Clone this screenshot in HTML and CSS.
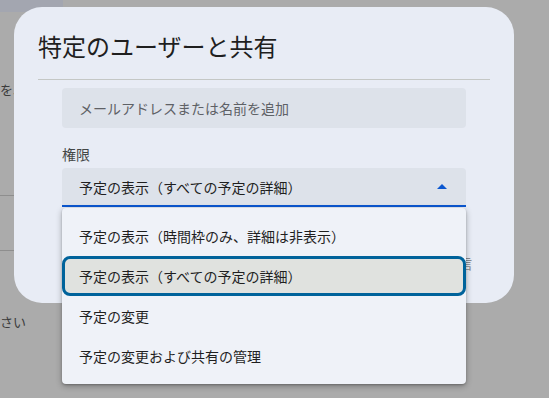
FILE: index.html
```html
<!DOCTYPE html>
<html lang="ja">
<head>
    <meta charset="UTF-8">
    <meta name="viewport" content="width=device-width, initial-scale=1.0">
    <title>特定のユーザーと共有</title>
    <link rel="stylesheet" href="styles.css">
</head>
<body>
    <!-- page behind the scrim -->
    <div class="page">
        <div class="page-tab"></div>
        <span class="page-text page-text-top">を、</span>
        <div class="page-rule page-rule-1"></div>
        <div class="page-rule page-rule-2"></div>
        <span class="page-text page-text-bottom">さい</span>
    </div>

    <div class="dialog">
        <h1 class="dialog-title">特定のユーザーと共有</h1>
        <div class="divider"></div>
        <div class="dialog-body">
            <div class="field">メールアドレスまたは名前を追加</div>
            <label class="field-label">権限</label>
            <div class="select">
                <span>予定の表示（すべての予定の詳細）</span>
                <span class="arrow"></span>
            </div>
            <div class="dialog-footer">送信</div>
        </div>
    </div>

    <!-- open select menu -->
    <ul class="menu">
        <li class="menu-item">予定の表示（時間枠のみ、詳細は非表示）</li>
        <li class="menu-item selected">予定の表示（すべての予定の詳細）</li>
        <li class="menu-item">予定の変更</li>
        <li class="menu-item">予定の変更および共有の管理</li>
    </ul>
</body>
</html>
```

FILE: styles.css
```css
body {
    margin: 0;
    padding: 0;
    width: 549px;
    height: 398px;
    overflow: hidden;
    background-color: #ababab;
    font-family: 'Noto Sans CJK JP', 'Noto Sans', sans-serif;
    color: #1f1f1f;
    position: relative;
}

.page {
    position: absolute;
    inset: 0;
}

.page-tab {
    position: absolute;
    left: 0;
    top: 0;
    width: 63px;
    height: 12px;
    background-color: #a3a6b0;
}

.page-text {
    position: absolute;
    left: 0;
    font-size: 13px;
    line-height: 16px;
    color: #3c3c3c;
}

.page-text-top {
    top: 82px;
}

.page-text-bottom {
    top: 314px;
}

.page-rule {
    position: absolute;
    left: 0;
    width: 14px;
    height: 1px;
    background-color: #8e8e8e;
}

.page-rule-1 {
    top: 195px;
}

.page-rule-2 {
    top: 250px;
}

.dialog {
    position: absolute;
    left: 14px;
    top: 7px;
    width: 500px;
    height: 296px;
    box-sizing: border-box;
    padding-top: 23px;
    background-color: #e8ecf5;
    border-radius: 28px;
}

.dialog-title {
    margin: 0 24px;
    font-size: 24px;
    line-height: 32px;
    font-weight: 400;
    color: #1f1f1f;
}

.divider {
    margin: 17px 24px 0;
    height: 1px;
    background-color: #c4c7c5;
}

.dialog-body {
    padding: 8px 48px 0;
}

.field {
    height: 40px;
    box-sizing: border-box;
    padding-left: 17px;
    display: flex;
    align-items: center;
    background-color: #dde2ea;
    border-radius: 4px;
    font-size: 14px;
    color: #5e6166;
}

.field-label {
    display: block;
    margin-top: 16px;
    font-size: 14px;
    line-height: 20px;
    color: #444746;
}

.select {
    margin-top: 4px;
    height: 39px;
    box-sizing: border-box;
    padding: 0 19px 0 17px;
    display: flex;
    align-items: center;
    justify-content: space-between;
    background-color: #dde2ea;
    border-radius: 4px 4px 0 0;
    border-bottom: 2px solid #0b57d0;
    font-size: 14px;
    color: #1f1f1f;
}

.arrow {
    width: 0;
    height: 0;
    border-left: 5px solid transparent;
    border-right: 5px solid transparent;
    border-bottom: 5px solid #0b57d0;
}

.dialog-footer {
    margin-top: 46px;
    margin-right: -6px;
    text-align: right;
    font-size: 14px;
    line-height: 20px;
    color: #8a8d92;
}

.menu {
    position: absolute;
    left: 62px;
    top: 208px;
    width: 404px;
    margin: 0;
    padding: 8px 0;
    list-style: none;
    background-color: #eff2f8;
    border-radius: 4px;
    box-shadow: 0 2px 6px rgba(0, 0, 0, 0.3), 0 1px 2px rgba(0, 0, 0, 0.2);
}

.menu-item {
    height: 40px;
    box-sizing: border-box;
    padding-left: 17px;
    display: flex;
    align-items: center;
    font-size: 14px;
    color: #1f1f1f;
}

.menu-item.selected {
    padding-left: 14px;
    border: 3px solid #00639b;
    border-radius: 8px;
    background-color: #e0e2df;
}
```
